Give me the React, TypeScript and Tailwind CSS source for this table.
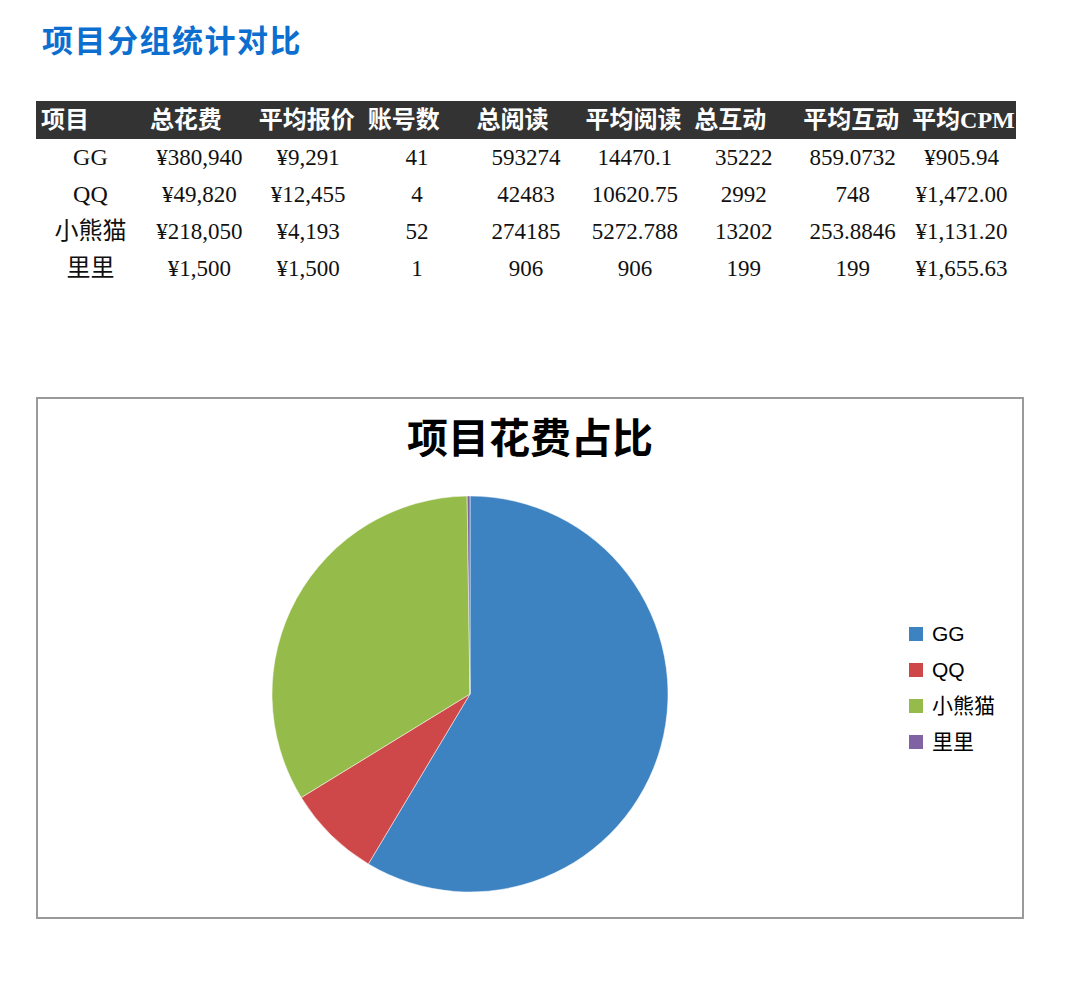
import React from 'react'

type Row = {
  name: string
  cost: number
  cells: string[]
}

const headers = ['项目', '总花费', '平均报价', '账号数', '总阅读', '平均阅读', '总互动', '平均互动', '平均CPM']

const rows: Row[] = [
  { name: 'GG', cost: 380940, cells: ['GG', '¥380,940', '¥9,291', '41', '593274', '14470.1', '35222', '859.0732', '¥905.94'] },
  { name: 'QQ', cost: 49820, cells: ['QQ', '¥49,820', '¥12,455', '4', '42483', '10620.75', '2992', '748', '¥1,472.00'] },
  { name: '小熊猫', cost: 218050, cells: ['小熊猫', '¥218,050', '¥4,193', '52', '274185', '5272.788', '13202', '253.8846', '¥1,131.20'] },
  { name: '里里', cost: 1500, cells: ['里里', '¥1,500', '¥1,500', '1', '906', '906', '199', '199', '¥1,655.63'] },
]

const colors = ['#3d83c2', '#cf4849', '#95bc4a', '#8063a3']

// pie slices, clockwise from 12 o'clock
const buildSlices = (cx: number, cy: number, r: number) => {
  const total = rows.reduce((s, r) => s + r.cost, 0)
  let start = 0
  return rows.map((row, i) => {
    const sweep = (row.cost / total) * Math.PI * 2
    const end = start + sweep
    const x1 = cx + r * Math.sin(start)
    const y1 = cy - r * Math.cos(start)
    const x2 = cx + r * Math.sin(end)
    const y2 = cy - r * Math.cos(end)
    const large = sweep > Math.PI ? 1 : 0
    const d = `M ${cx} ${cy} L ${x1} ${y1} A ${r} ${r} 0 ${large} 1 ${x2} ${y2} Z`
    start = end
    return { d, color: colors[i] }
  })
}

const serif = { fontFamily: '"Liberation Serif", "Noto Sans CJK SC", serif' }
const sans = { fontFamily: '"Liberation Sans", "Noto Sans CJK SC", sans-serif' }

export default function App() {
  const slices = buildSlices(200, 200, 198)

  return (
    <div className="w-[1080px] h-[985px] bg-white pl-[36px] pt-[24px]">
      {/* Page title */}
      <h1
        className="ml-[6px] text-[31px] leading-[36px] font-bold text-[#0c6fcf] tracking-[1.5px]"
        style={sans}
      >
        项目分组统计对比
      </h1>

      {/* Stats table */}
      <div className="mt-[41px] w-[980px]" style={serif}>
        <div className="grid grid-cols-9 h-[38px] bg-[#333333] items-center">
          {headers.map((h) => (
            <div key={h} className="pl-[5px] text-[24px] leading-[38px] font-bold text-white whitespace-nowrap">
              {h}
            </div>
          ))}
        </div>
        {rows.map((row) => (
          <div key={row.name} className="grid grid-cols-9 h-[37px] items-center">
            {row.cells.map((c, i) => (
              <div
                key={i}
                className={
                  i === 0
                    ? 'text-center text-[24px] leading-[37px] text-[#111111] whitespace-nowrap'
                    : 'text-center text-[23px] leading-[37px] text-[#111111] whitespace-nowrap'
                }
              >
                {c}
              </div>
            ))}
          </div>
        ))}
      </div>

      {/* Chart */}
      <div className="mt-[110px] w-[988px] h-[522px] border-2 border-[#9a9a9a]">
        <h2
          className="pt-[19px] text-center text-[41px] leading-[42px] font-bold text-black"
          style={sans}
        >
          项目花费占比
        </h2>
        <div className="flex items-start mt-[34px]">
          <svg width="400" height="400" viewBox="0 0 400 400" className="ml-[232px] shrink-0">
            {slices.map((s, i) => (
              <path key={i} d={s.d} fill={s.color} stroke="#ffffff" strokeWidth="0.5" />
            ))}
          </svg>
          <div className="ml-[239px] mt-[128px] flex flex-col gap-[13px]" style={sans}>
            {rows.map((row, i) => (
              <div key={row.name} className="flex items-center gap-[9px] h-[23px]">
                <span className="w-[14px] h-[14px]" style={{ backgroundColor: colors[i] }} />
                <span className="text-[21px] leading-[23px] text-black">{row.name}</span>
              </div>
            ))}
          </div>
        </div>
      </div>
    </div>
  )
}
